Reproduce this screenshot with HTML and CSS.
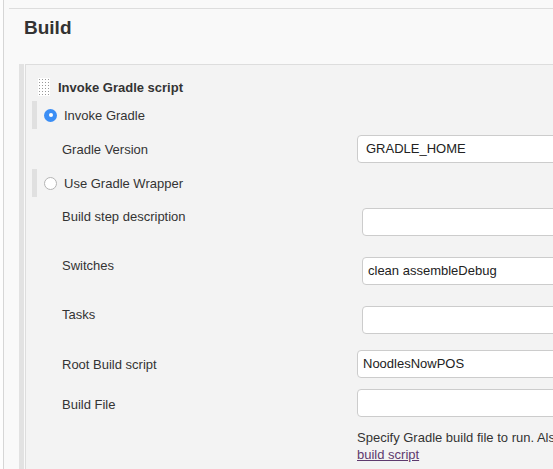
FILE: index.html
```html
<!DOCTYPE html>
<html>
<head>
<meta charset="utf-8">
<link rel="stylesheet" href="styles.css">
</head>
<body>
<div class="page">
  <div class="section">
    <h2 class="section-title">Build</h2>
    <div class="step-wrap">
      <div class="step">
        <div class="step-head">
          <span class="handle"></span>
          <span class="step-title">Invoke Gradle script</span>
        </div>

        <div class="radio-row">
          <span class="radio-bar"></span>
          <span class="radio checked"></span>
          <span class="radio-label">Invoke Gradle</span>
        </div>

        <div class="field field-gradle">
          <span class="label">Gradle Version</span>
          <div class="input input-a">GRADLE_HOME</div>
        </div>

        <div class="radio-row radio-row-2">
          <span class="radio-bar"></span>
          <span class="radio"></span>
          <span class="radio-label">Use Gradle Wrapper</span>
        </div>

        <div class="field field-top field-desc">
          <span class="label">Build step description</span>
          <div class="input input-b"></div>
        </div>

        <div class="field field-top">
          <span class="label">Switches</span>
          <div class="input input-b">clean assembleDebug</div>
        </div>

        <div class="field field-top">
          <span class="label">Tasks</span>
          <div class="input input-b"></div>
        </div>

        <div class="field field-root">
          <span class="label">Root Build script</span>
          <div class="input input-a">NoodlesNowPOS</div>
        </div>

        <div class="field field-file">
          <span class="label">Build File</span>
          <div class="input input-a"></div>
        </div>

        <div class="help">
          <span class="help-line">Specify Gradle build file to run. Also, some environment variables are available to the</span><br>
          <a class="help-link" href="#">build script</a>
        </div>
      </div>
    </div>
  </div>
</div>
</body>
</html>
```

FILE: styles.css
```css
html, body {
  margin: 0;
  padding: 0;
  overflow: hidden;
  background: #fdfdfd;
  font-family: "Liberation Sans", Arial, Helvetica, sans-serif;
  font-size: 13px;
  color: #333;
}

.page {
  margin-left: 3px;
  border-left: 1px solid #d6d6d6;
  background: #f9f9f9;
  height: 469px;
  padding-top: 8px;
  box-sizing: border-box;
}

.section {
  margin-left: 5px;
  border-top: 1px solid #dddddd;
  width: 900px;
}

.section-title {
  margin: 8px 0 0 15px;
  font-size: 19px;
  line-height: 22px;
  font-weight: bold;
  color: #333;
}

.step-wrap {
  margin-top: 25px;
  margin-left: 10px;
  border-left: 5px solid #e2e2e2;
  padding-left: 1px;
  height: 420px;
}

.step {
  border: 1px solid #dddddd;
  background: #f3f3f3;
  height: 100%;
  box-sizing: border-box;
}

.step-head {
  display: flex;
  align-items: center;
  margin-top: 13px;
  height: 18px;
}

.handle {
  width: 12px;
  height: 18px;
  margin-left: 12px;
  background-color: #ffffff;
  background-image: radial-gradient(circle, #9a9a9a 0.7px, transparent 1px);
  background-size: 3px 3px;
  background-position: 0 0;
}

.step-title {
  margin-left: 8px;
  font-weight: bold;
  line-height: 15px;
}

.radio-row {
  display: flex;
  align-items: center;
  height: 28px;
  margin-top: 5px;
}

.radio-row-2 {
  margin-top: 6px;
}

.radio-bar {
  width: 5px;
  height: 28px;
  margin-left: 6px;
  background: #e0e0e0;
}

.radio {
  width: 13px;
  height: 13px;
  margin-left: 7px;
  box-sizing: border-box;
  border-radius: 50%;
  border: 1px solid #b4b4b4;
  background: #ffffff;
  position: relative;
}

.radio.checked {
  border: none;
  background: #3b8ef5;
}

.radio.checked::after {
  content: "";
  position: absolute;
  left: 4.5px;
  top: 4.5px;
  width: 4px;
  height: 4px;
  border-radius: 50%;
  background: #ffffff;
}

.radio-label {
  margin-left: 7px;
  line-height: 15px;
}

.field {
  display: flex;
  align-items: center;
  height: 28px;
}

.field-gradle {
  margin-top: 6px;
}

.label {
  width: 0;
  white-space: nowrap;
  margin-left: 36px;
  line-height: 15px;
}

.field-top {
  align-items: flex-start;
  height: 49px;
}

.field-top .label {
  margin-top: 1px;
}

.field-desc {
  margin-top: 11px;
}

.field-root {
  margin-top: -5px;
}

.field-file {
  margin-top: 11px;
}

.field-file .label {
  margin-top: 2px;
}

.input {
  height: 28px;
  width: 400px;
  box-sizing: border-box;
  background: #ffffff;
  border: 1px solid #cccccc;
  border-radius: 4px;
  line-height: 26px;
  white-space: nowrap;
  color: #222;
}

.input-a {
  margin-left: 295px;
  padding-left: 8px;
}

.input-b {
  margin-left: 300px;
  padding-left: 5px;
}

.field-root .input-a {
  padding-left: 5px;
}

.help {
  margin-top: 12px;
  margin-left: 331px;
  line-height: 17px;
  white-space: nowrap;
  color: #333;
}

.help-link {
  color: #5e3a6e;
  text-decoration: underline;
}
```
